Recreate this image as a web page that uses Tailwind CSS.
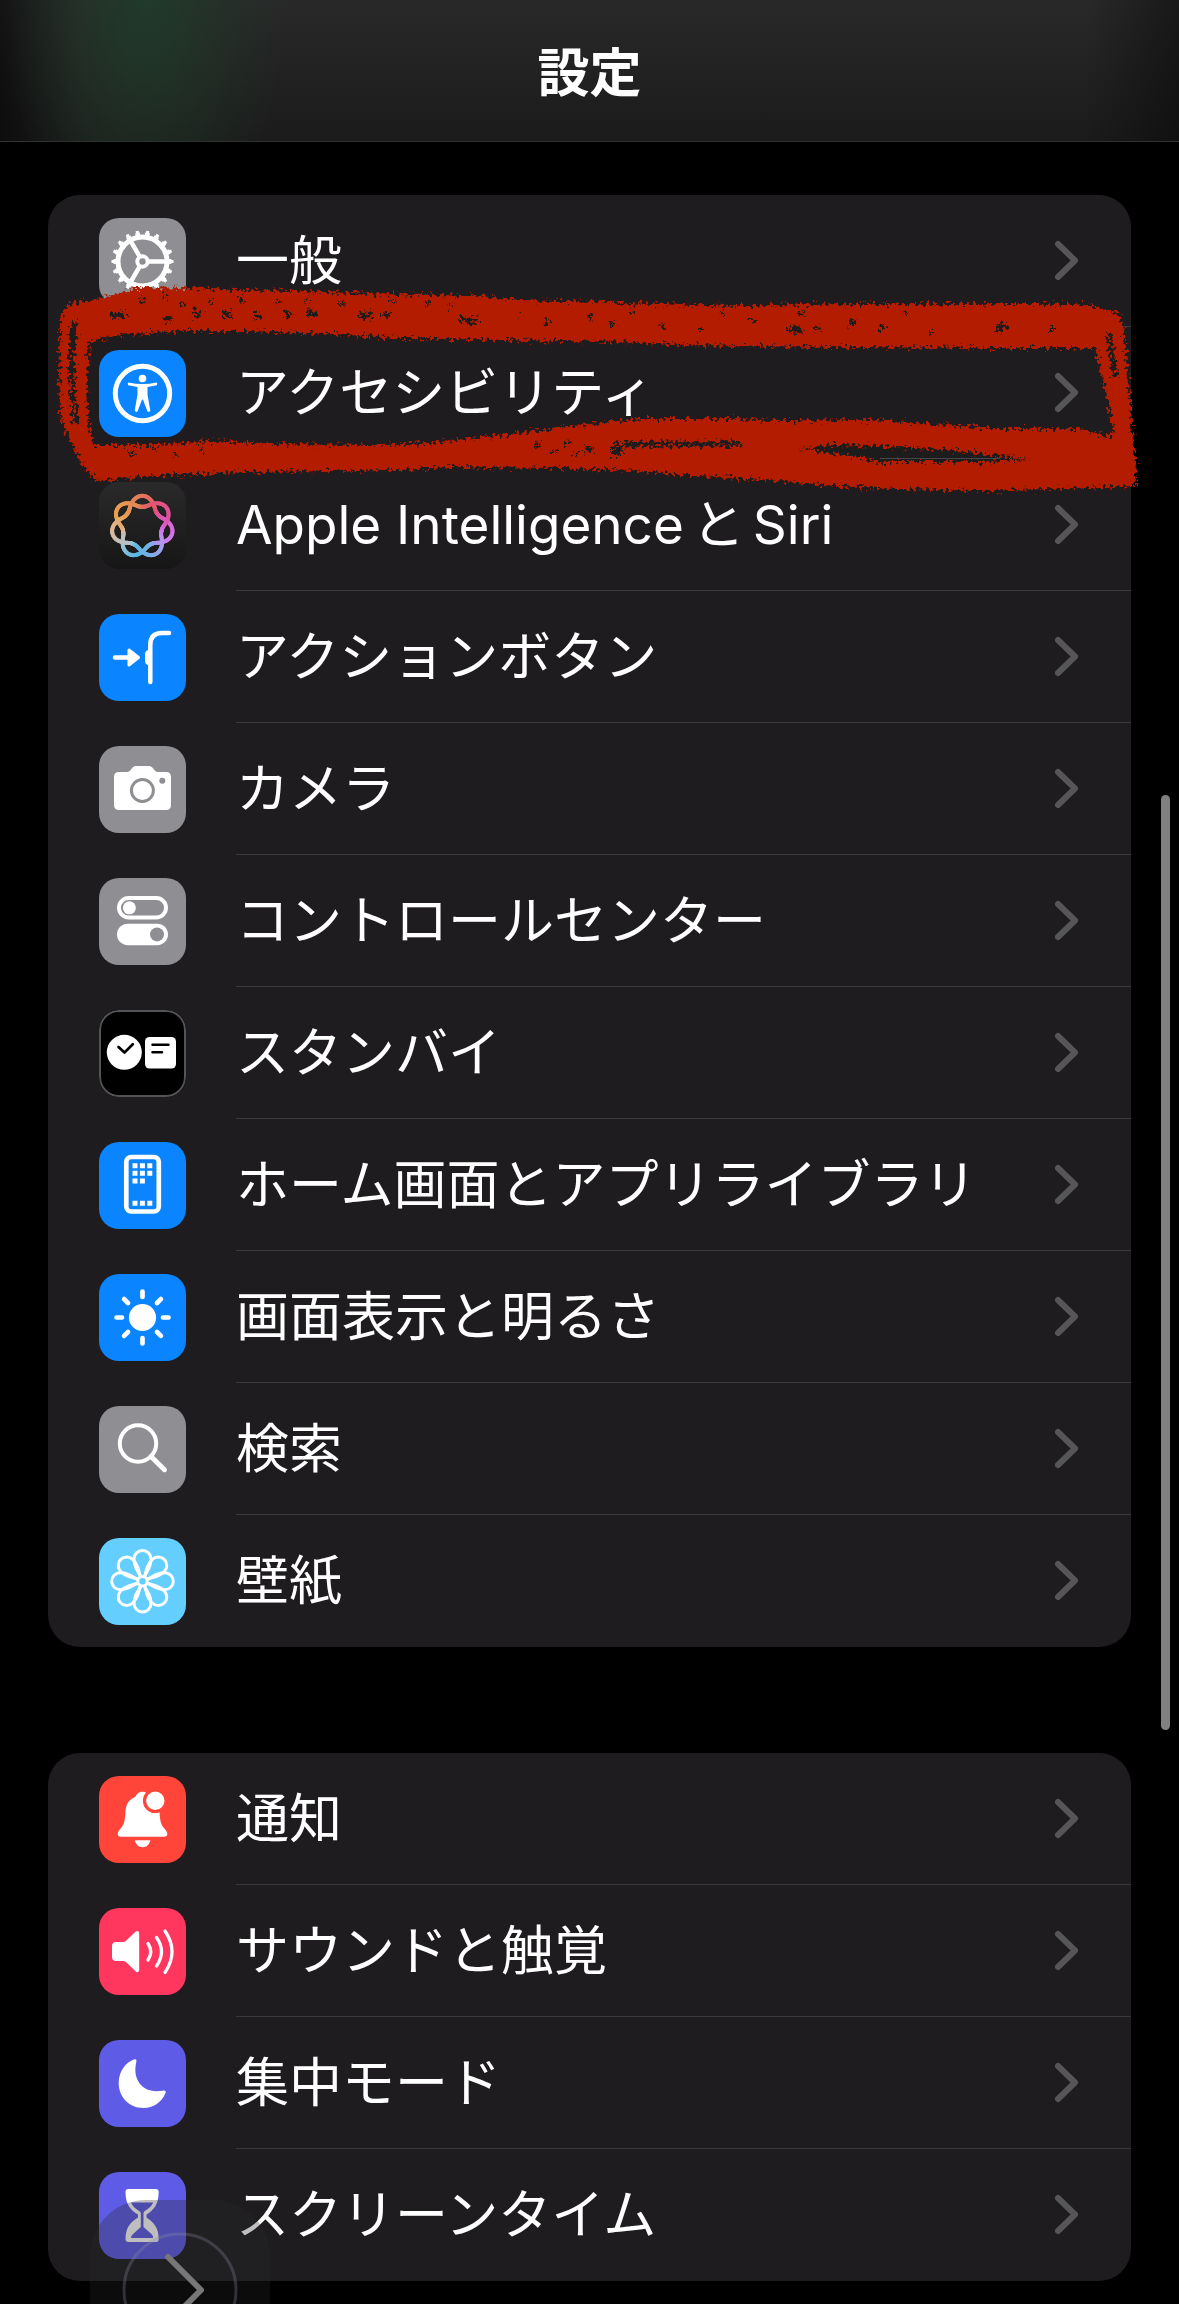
<!DOCTYPE html>
<html lang="ja">
<head>
    <meta charset="UTF-8">
    <meta name="viewport" content="width=device-width, initial-scale=1.0">
    <title>設定</title>
    <script src="https://cdn.jsdelivr.net/npm/@tailwindcss/browser@4"></script>
</head>
<body class="relative bg-black text-white overflow-x-hidden font-[Inter,'Noto_Sans_CJK_JP',sans-serif]">
    <!-- Header -->
    <header class="relative h-[142px] pt-[6px] flex items-center justify-center overflow-hidden border-b border-[#303030] bg-linear-to-b from-[#292929] to-[#1b1b1b]">
        <div class="absolute inset-0 bg-[linear-gradient(90deg,#0008_0%,#0000_7%,#0000_92%,#0006_100%)]"></div>
        <div class="absolute inset-0 bg-[radial-gradient(140px_260px_at_145px_0px,#203a29_0%,#203a2980_45%,#203a2900_100%)]"></div>
        <h1 class="relative text-[52px] leading-[60px] font-bold">設定</h1>
    </header>

    <main class="px-12 pt-[53px] pb-[23px] flex flex-col gap-[106px]">
        <!-- Device settings -->
        <ul class="bg-[#1e1c1f] rounded-[32px]">
            <li>
                <a href="#general" class="flex items-center h-[132px] pl-[51px]">
                    <svg class="size-[87px] shrink-0 rounded-[20px] bg-[#8e8e93]" viewBox="0 0 87 87" fill="none" stroke="#fff">
                        <circle cx="43.5" cy="43.5" r="24.5" stroke-width="5"/>
                        <circle cx="43.5" cy="43.5" r="27.5" stroke-width="3" pathLength="180" stroke-dasharray="5 5" stroke-dashoffset="2.5"/>
                        <circle cx="43.5" cy="43.5" r="29.5" stroke-width="3" pathLength="180" stroke-dasharray="3 7" stroke-dashoffset="1.5"/>
                        <circle cx="43.5" cy="43.5" r="5.2" stroke-width="4"/>
                        <path d="M49 43.500H67M40.700 38.700L31.700 23.100M40.700 48.300L31.700 63.900" stroke-width="4.500"/>
                    </svg>
                    <span class="flex-1 flex items-center justify-between h-full ml-[50px] pr-[51px] border-b border-[#3a3a3d]">
                        <span class="relative z-10 text-[53px] leading-[64px]">一般</span>
                        <svg class="w-[27px] h-[43px]" viewBox="0 0 27 43" fill="none" stroke="#565659" stroke-width="6" stroke-linecap="round" stroke-linejoin="round"><path d="M5 5L22 21.500L5 38"/></svg>
                    </span>
                </a>
            </li>
            <li class="relative">
                <a href="#accessibility" class="flex items-center h-[132px] pl-[51px]">
                    <svg class="size-[87px] shrink-0 rounded-[20px] bg-[#0a84ff]" viewBox="0 0 87 87" fill="#fff">
                        <circle cx="43.5" cy="43.500" r="27.200" fill="none" stroke="#fff" stroke-width="5"/>
                        <circle cx="43.5" cy="28.500" r="3.800"/>
                        <path d="M29.500 32.600Q43.500 35.600 57.500 32.600Q59 33.500 57.800 35.200L48.500 37V44.500L51.300 60.500Q50.500 62.800 48.500 61.500L43.900 49.500H43.100L38.500 61.500Q36.500 62.800 35.700 60.500L38.500 44.500V37L29.200 35.200Q28 33.500 29.500 32.600Z"/>
                    </svg>
                    <span class="flex-1 flex items-center justify-between h-full ml-[50px] pr-[51px] border-b border-[#3a3a3d]">
                        <span class="relative z-10 text-[53px] leading-[64px]">アクセシビリティ</span>
                        <svg class="w-[27px] h-[43px]" viewBox="0 0 27 43" fill="none" stroke="#565659" stroke-width="6" stroke-linecap="round" stroke-linejoin="round"><path d="M5 5L22 21.500L5 38"/></svg>
                    </span>
                </a>
                <!-- Hand-drawn marker around the row -->
                <svg class="absolute left-0 -right-4 -top-12 w-[calc(100%+16px)] h-[224px] pointer-events-none overflow-visible" viewBox="48 279 1099 224" preserveAspectRatio="none">
                    <defs>
                        <filter id="crayon" filterUnits="userSpaceOnUse" x="40" y="270" width="1120" height="240">
                            <feTurbulence type="fractalNoise" baseFrequency="0.3" numOctaves="2" seed="4" result="n"/>
                            <feDisplacementMap in="SourceGraphic" in2="n" scale="14" xChannelSelector="R" yChannelSelector="G"/>
                            <feGaussianBlur stdDeviation="0.5"/>
                        </filter>
                    </defs>
                    <g filter="url(#crayon)">
                        <path fill="#b41a00" fill-rule="evenodd" d="M60 320L67 304L98 299L140 287L185 288L240 290L300 291L380 294L480 296L520 300L570 301L650 304L740 306L855 304L1000 304L1085 304L1118 313L1123 325L1126 350L1130 400L1134 450L1137 470L1135 486L1080 488L980 491L900 489L820 485L780 481L700 476L640 471L560 468L450 467L400 470L330 471L250 472L170 475L130 478L98 481L85 470L75 450L65 430L60 410L59 370ZM89 341L120 335L180 331L250 331L330 334L400 338L500 340L620 342L680 345L740 346L830 347L1000 348L1096 348L1100 370L1108 400L1114 434L1105 436L1080 429L1003 429L947 425L870 420L770 421L737 419L640 419L580 425L513 434L430 443L380 445L273 444L207 441L157 445L93 445L88 420L87 380Z"/>
                        <g fill="none" stroke="#1e1c1f">
                            <path d="M74 321Q71 350 72 375" stroke-width="6"/>
                            <path d="M72 375Q72 400 76 424" stroke-width="5"/>
                            <path d="M1109 334Q1111 350 1115 378" stroke-width="5"/>
                            <path d="M615 446L640 444L742 444" stroke-width="5"/>
                            <path d="M585 448L592 451M612 452L622 452" stroke-width="6"/>
                            <path d="M110 316L125 315M165 322L170 316M192 311L200 316M222 314L232 313M255 317L260 315M285 315L290 314M308 313L318 315M360 316L372 315M383 315L390 314M460 319L478 321M545 322L549 323M610 324L614 323M660 327L664 326M788 330L802 329M815 328L819 327M850 321L856 322M880 328L884 328M996 328L1008 326M1050 329L1054 329" stroke-width="6"/>
                            <path d="M140 300L144 303M162 294L165 297M180 303L183 305M210 302L213 301M240 298L243 300M275 300L279 303M306 298L309 299M340 304L344 303M392 300L395 303M425 302L429 303M450 305L453 306M520 311L522 313M590 318L592 316M630 312L633 313M700 330L704 330M720 313L722 314M750 320L754 321M800 313L803 315M905 312L907 314M930 330L933 333M130 452L134 456M152 448L155 450M176 454L178 455M200 450L204 449M535 444L540 446M550 451L556 452M566 443L570 445M574 455L578 456" stroke-width="4"/>
                        </g>
                        <path fill="#1e1c1f" d="M800 449L830 445L880 446L947 450L1030 459L980 462L880 462L845 455Z"/>
                    </g>
                    <path d="M880 458.500H1000" stroke="#45454a" stroke-width="1"/>
                </svg>
            </li>
            <li>
                <a href="#siri" class="flex items-center h-[132px] pl-[51px]">
                    <svg id="siriIcon" class="size-[87px] shrink-0 rounded-[20px] bg-linear-to-b from-[#2a2a2a] to-[#161616]" viewBox="0 0 87 87" fill="none" stroke-width="4" stroke-linecap="round"></svg>
                    <span class="flex-1 flex items-center justify-between h-full ml-[50px] pr-[51px] border-b border-[#3a3a3d]">
                        <span class="text-[53px] leading-[64px]">Apple Intelligence<span class="mx-2">と</span>Siri</span>
                        <svg class="w-[27px] h-[43px]" viewBox="0 0 27 43" fill="none" stroke="#565659" stroke-width="6" stroke-linecap="round" stroke-linejoin="round"><path d="M5 5L22 21.500L5 38"/></svg>
                    </span>
                </a>
            </li>
            <li>
                <a href="#action-button" class="flex items-center h-[132px] pl-[51px]">
                    <svg class="size-[87px] shrink-0 rounded-[20px] bg-[#0a84ff]" viewBox="0 0 87 87" fill="none" stroke="#fff" stroke-width="4.500" stroke-linecap="round" stroke-linejoin="round">
                        <path d="M16 43.500H31M51.300 68V31Q51.300 19 63 19H70"/>
                        <path d="M30 36L39.500 43.500L30 51Z" fill="#fff" stroke-width="3"/>
                        <path d="M51 36H49Q46 37 46 40V47Q46 50 49 51H51Z" fill="#fff" stroke="none"/>
                    </svg>
                    <span class="flex-1 flex items-center justify-between h-full ml-[50px] pr-[51px] border-b border-[#3a3a3d]">
                        <span class="text-[53px] leading-[64px]">アクションボタン</span>
                        <svg class="w-[27px] h-[43px]" viewBox="0 0 27 43" fill="none" stroke="#565659" stroke-width="6" stroke-linecap="round" stroke-linejoin="round"><path d="M5 5L22 21.500L5 38"/></svg>
                    </span>
                </a>
            </li>
            <li>
                <a href="#camera" class="flex items-center h-[132px] pl-[51px]">
                    <svg class="size-[87px] shrink-0 rounded-[20px] bg-[#8e8e93]" viewBox="0 0 87 87" fill="#fff">
                        <path d="M20 26H28Q30.500 26 32 23.500Q34 20 37 20H50Q53 20 55 23.500Q56.500 26 59 26H67Q72 26 72 31V59Q72 64 67 64H20Q15 64 15 59V31Q15 26 20 26Z"/>
                        <circle cx="43.400" cy="44.500" r="11" fill="none" stroke="#8e8e93" stroke-width="3"/>
                        <circle cx="63.300" cy="34.700" r="3" fill="#8e8e93"/>
                    </svg>
                    <span class="flex-1 flex items-center justify-between h-full ml-[50px] pr-[51px] border-b border-[#3a3a3d]">
                        <span class="text-[53px] leading-[64px]">カメラ</span>
                        <svg class="w-[27px] h-[43px]" viewBox="0 0 27 43" fill="none" stroke="#565659" stroke-width="6" stroke-linecap="round" stroke-linejoin="round"><path d="M5 5L22 21.500L5 38"/></svg>
                    </span>
                </a>
            </li>
            <li>
                <a href="#control-center" class="flex items-center h-[132px] pl-[51px]">
                    <svg class="size-[87px] shrink-0 rounded-[20px] bg-[#8e8e93]" viewBox="0 0 87 87" fill="#fff">
                        <rect x="20" y="20" width="47" height="19.500" rx="9.700" fill="none" stroke="#fff" stroke-width="4"/>
                        <circle cx="30.400" cy="29.800" r="6.500"/>
                        <rect x="18" y="45.700" width="51" height="21.500" rx="10.700"/>
                        <circle cx="58" cy="56.400" r="7" fill="#8e8e93"/>
                    </svg>
                    <span class="flex-1 flex items-center justify-between h-full ml-[50px] pr-[51px] border-b border-[#3a3a3d]">
                        <span class="text-[53px] leading-[64px]">コントロールセンター</span>
                        <svg class="w-[27px] h-[43px]" viewBox="0 0 27 43" fill="none" stroke="#565659" stroke-width="6" stroke-linecap="round" stroke-linejoin="round"><path d="M5 5L22 21.500L5 38"/></svg>
                    </span>
                </a>
            </li>
            <li>
                <a href="#standby" class="flex items-center h-[132px] pl-[51px]">
                    <svg class="size-[87px] shrink-0 rounded-[20px] bg-black" viewBox="0 0 87 87" fill="#fff">
                        <rect x="1" y="1" width="85" height="85" rx="19" fill="none" stroke="#545456" stroke-width="2"/>
                        <circle cx="25.300" cy="42.300" r="17.500"/>
                        <path d="M19.500 37L25.500 42.500L33.800 34.300" fill="none" stroke="#000" stroke-width="2.700" stroke-linecap="round" stroke-linejoin="round"/>
                        <rect x="46" y="27" width="31" height="31.500" rx="4.500"/>
                        <path d="M53.500 34.700H69.500M53.500 42.300H63" stroke="#000" stroke-width="2.500" stroke-linecap="round"/>
                    </svg>
                    <span class="flex-1 flex items-center justify-between h-full ml-[50px] pr-[51px] border-b border-[#3a3a3d]">
                        <span class="text-[53px] leading-[64px]">スタンバイ</span>
                        <svg class="w-[27px] h-[43px]" viewBox="0 0 27 43" fill="none" stroke="#565659" stroke-width="6" stroke-linecap="round" stroke-linejoin="round"><path d="M5 5L22 21.500L5 38"/></svg>
                    </span>
                </a>
            </li>
            <li>
                <a href="#home-screen" class="flex items-center h-[132px] pl-[51px]">
                    <svg class="size-[87px] shrink-0 rounded-[20px] bg-[#0a84ff]" viewBox="0 0 87 87" fill="none" stroke="#fff">
                        <rect x="27.300" y="15" width="32.500" height="54.500" rx="5" stroke-width="4.700"/>
                        <path d="M33.500 23.700H54M33.500 31.300H54M33.500 39H46M33.500 61.300H54" stroke-width="5" stroke-dasharray="5 2.400"/>
                    </svg>
                    <span class="flex-1 flex items-center justify-between h-full ml-[50px] pr-[51px] border-b border-[#3a3a3d]">
                        <span class="text-[53px] leading-[64px]">ホーム画面とアプリライブラリ</span>
                        <svg class="w-[27px] h-[43px]" viewBox="0 0 27 43" fill="none" stroke="#565659" stroke-width="6" stroke-linecap="round" stroke-linejoin="round"><path d="M5 5L22 21.500L5 38"/></svg>
                    </span>
                </a>
            </li>
            <li>
                <a href="#display" class="flex items-center h-[132px] pl-[51px]">
                    <svg class="size-[87px] shrink-0 rounded-[20px] bg-[#0a84ff]" viewBox="0 0 87 87" fill="#fff" stroke="#fff">
                        <circle cx="43.500" cy="43.500" r="13.600" stroke="none"/>
                        <path d="M43.500 17.500V23M43.500 64V69.500M17.500 43.500H23M64 43.500H69.500M25.100 25.100L29 29M58 58L61.900 61.900M25.100 61.900L29 58M58 29L61.900 25.100" stroke-width="4.700" stroke-linecap="round"/>
                    </svg>
                    <span class="flex-1 flex items-center justify-between h-full ml-[50px] pr-[51px] border-b border-[#3a3a3d]">
                        <span class="text-[53px] leading-[64px]">画面表示と明るさ</span>
                        <svg class="w-[27px] h-[43px]" viewBox="0 0 27 43" fill="none" stroke="#565659" stroke-width="6" stroke-linecap="round" stroke-linejoin="round"><path d="M5 5L22 21.500L5 38"/></svg>
                    </span>
                </a>
            </li>
            <li>
                <a href="#search" class="flex items-center h-[132px] pl-[51px]">
                    <svg class="size-[87px] shrink-0 rounded-[20px] bg-[#8e8e93]" viewBox="0 0 87 87" fill="none" stroke="#fff" stroke-linecap="round">
                        <circle cx="39" cy="37.500" r="18.200" stroke-width="4"/>
                        <path d="M52 50.500L65.500 63.700" stroke-width="5"/>
                    </svg>
                    <span class="flex-1 flex items-center justify-between h-full ml-[50px] pr-[51px] border-b border-[#3a3a3d]">
                        <span class="text-[53px] leading-[64px]">検索</span>
                        <svg class="w-[27px] h-[43px]" viewBox="0 0 27 43" fill="none" stroke="#565659" stroke-width="6" stroke-linecap="round" stroke-linejoin="round"><path d="M5 5L22 21.500L5 38"/></svg>
                    </span>
                </a>
            </li>
            <li>
                <a href="#wallpaper" class="flex items-center h-[132px] pl-[51px]">
                    <svg class="size-[87px] shrink-0 rounded-[20px] bg-[#64cfff]" viewBox="-43.500 -43.200 87 87" fill="none" stroke="#fff" stroke-width="3">
                        <path id="petal" d="M0 -3C-5 -9 -8.500 -16 -8.500 -22.300A8.500 8.500 0 0 1 8.500 -22.300C8.500 -16 5 -9 0 -3Z"/>
                        <use href="#petal" transform="rotate(45)"/>
                        <use href="#petal" transform="rotate(90)"/>
                        <use href="#petal" transform="rotate(135)"/>
                        <use href="#petal" transform="rotate(180)"/>
                        <use href="#petal" transform="rotate(225)"/>
                        <use href="#petal" transform="rotate(270)"/>
                        <use href="#petal" transform="rotate(315)"/>
                        <circle r="4.500" fill="#64cfff" stroke-width="2.500"/>
                    </svg>
                    <span class="flex-1 flex items-center justify-between h-full ml-[50px] pr-[51px] border-b border-transparent">
                        <span class="text-[53px] leading-[64px]">壁紙</span>
                        <svg class="w-[27px] h-[43px]" viewBox="0 0 27 43" fill="none" stroke="#565659" stroke-width="6" stroke-linecap="round" stroke-linejoin="round"><path d="M5 5L22 21.500L5 38"/></svg>
                    </span>
                </a>
            </li>
        </ul>

        <!-- Notifications and focus -->
        <ul class="bg-[#1e1c1f] rounded-[32px]">
            <li>
                <a href="#notifications" class="flex items-center h-[132px] pl-[51px]">
                    <svg class="size-[87px] shrink-0 rounded-[20px] bg-[#ff453a]" viewBox="0 0 87 87" fill="#fff">
                        <path d="M43.500 15.700C39 15.700 37.500 18.500 36.500 20.800C29 24 27 29 26.500 35C26 44 25.500 48 22 52C19.500 55 18.700 56.500 18.700 58Q18.700 60.700 22 60.700H65Q68.300 60.700 68.300 58C68.300 56.500 67.500 55 65 52C61.500 48 61 44 60.500 35C60 29 58 24 50.500 20.800C49.500 18.500 48 15.700 43.500 15.700Z"/>
                        <path d="M35.800 64.300H51.400C50.500 68.500 47.500 71.300 43.600 71.300S36.700 68.500 35.800 64.300Z"/>
                        <circle cx="56.300" cy="24.700" r="10.800" stroke="#ff453a" stroke-width="3.200"/>
                    </svg>
                    <span class="flex-1 flex items-center justify-between h-full ml-[50px] pr-[51px] border-b border-[#3a3a3d]">
                        <span class="text-[53px] leading-[64px]">通知</span>
                        <svg class="w-[27px] h-[43px]" viewBox="0 0 27 43" fill="none" stroke="#565659" stroke-width="6" stroke-linecap="round" stroke-linejoin="round"><path d="M5 5L22 21.500L5 38"/></svg>
                    </span>
                </a>
            </li>
            <li>
                <a href="#sound" class="flex items-center h-[132px] pl-[51px]">
                    <svg class="size-[87px] shrink-0 rounded-[20px] bg-[#ff375f]" viewBox="0 0 87 87" fill="none" stroke="#fff" stroke-width="3.300" stroke-linecap="round">
                        <path d="M17 34H24Q25.500 34 27 32.700L36.500 23.700Q38 22.500 39.200 23.200Q40.200 23.800 40.200 25V62Q40.200 63.500 39 64Q37.800 64.500 36.500 63.300L27 54Q25.500 53 24 53H17Q13 53 13 49V38Q13 34 17 34Z" fill="#fff" stroke="none"/>
                        <path d="M49 35.500Q54.500 43.500 49 52M57.500 29.500Q67.500 43.500 57.500 58M66 23Q80 43.500 66 64.500"/>
                    </svg>
                    <span class="flex-1 flex items-center justify-between h-full ml-[50px] pr-[51px] border-b border-[#3a3a3d]">
                        <span class="text-[53px] leading-[64px]">サウンドと触覚</span>
                        <svg class="w-[27px] h-[43px]" viewBox="0 0 27 43" fill="none" stroke="#565659" stroke-width="6" stroke-linecap="round" stroke-linejoin="round"><path d="M5 5L22 21.500L5 38"/></svg>
                    </span>
                </a>
            </li>
            <li>
                <a href="#focus" class="flex items-center h-[132px] pl-[51px]">
                    <svg class="size-[87px] shrink-0 rounded-[20px] bg-[#5e5ce6]" viewBox="0 0 87 87" fill="#fff">
                        <path d="M35.500 19.200Q38 18.800 37.300 22C33 40 44 54 63.500 50.700Q67.500 50 66.500 53C63 62 54 68 44.500 68C30 68 19.700 57 19.700 43C19.700 32 26 22.500 35.500 19.200Z"/>
                    </svg>
                    <span class="flex-1 flex items-center justify-between h-full ml-[50px] pr-[51px] border-b border-[#3a3a3d]">
                        <span class="text-[53px] leading-[64px]">集中モード</span>
                        <svg class="w-[27px] h-[43px]" viewBox="0 0 27 43" fill="none" stroke="#565659" stroke-width="6" stroke-linecap="round" stroke-linejoin="round"><path d="M5 5L22 21.500L5 38"/></svg>
                    </span>
                </a>
            </li>
            <li>
                <a href="#screen-time" class="flex items-center h-[132px] pl-[51px]">
                    <svg class="size-[87px] shrink-0 rounded-[20px] bg-[#5e5ce6]" viewBox="0 0 87 87" fill="#fff">
                        <path d="M29.500 17H56.700Q59.700 17 59.700 20C59.700 33 54 38.500 47.500 42.500V45.500C54 50 59.700 55 59.700 67Q59.700 70 56.700 70H29.500Q26.500 70 26.500 67C26.500 55 32 50 39 45.500V42.500C32 38.500 26.500 33 26.500 20Q26.500 17 29.500 17Z"/>
                        <path d="M32 30.500H54.300C52 35 49 37 45.500 39.300Q44.500 40 44.500 41.500V55L53 62.500Q55 66 53.500 66H32.500Q31 66 33.500 62.500L41.800 55V41.500Q41.800 40 40.500 39.300C37 37 34 35 32 30.500Z" fill="#5e5ce6"/>
                    </svg>
                    <span class="flex-1 flex items-center justify-between h-full ml-[50px] pr-[51px] border-b border-transparent">
                        <span class="text-[53px] leading-[64px]">スクリーンタイム</span>
                        <svg class="w-[27px] h-[43px]" viewBox="0 0 27 43" fill="none" stroke="#565659" stroke-width="6" stroke-linecap="round" stroke-linejoin="round"><path d="M5 5L22 21.500L5 38"/></svg>
                    </span>
                </a>
            </li>
        </ul>
    </main>

    <!-- Scroll indicator -->
    <div class="fixed right-[9px] top-[795px] w-[9px] h-[935px] rounded-full bg-[#808080]"></div>

    <!-- Floating button -->
    <button type="button" aria-label="次へ" class="fixed left-[90px] -bottom-[76px] z-20 size-[180px] rounded-[56px] bg-[#282828]/30 flex items-center justify-center">
        <svg class="size-[120px]" viewBox="0 0 120 120" fill="none">
            <circle cx="60" cy="60" r="56" stroke="#8a8aa0" stroke-opacity=".3" stroke-width="3"/>
            <path d="M48 27L81 60L48 93" stroke="#777" stroke-width="6" stroke-linecap="round" stroke-linejoin="round"/>
        </svg>
    </button>

    <script>
        // Seven-lobed loop, coloured by angle clockwise from the top
        const siriIcon = document.getElementById('siriIcon');
        const colors = [[226,118,92], [228,84,112], [222,80,160], [216,108, 226], [184,146,240], [120,176,232], [86,184,226], [176,196,206], [222,184,156], [232,164,76], [232,148,84]];
        const steps = 280;

        function point(i) {
            const t = i / steps * Math.PI * 4;
            const r = 24 + 5.5 * Math.cos(3.5 * t) + 1.2 * Math.cos(7 * t);
            const angle = t + 0.12 * Math.sin(3.5 * t);
            return (43.3 + r * Math.sin(angle)).toFixed(2) + ' ' + (44.5 - r * Math.cos(angle)).toFixed(2);
        }

        for (let i = 0; i < steps; i++) {
            const pos = (i / steps * 2 % 1) * colors.length;
            const a = colors[Math.floor(pos)];
            const b = colors[(Math.floor(pos) + 1) % colors.length];
            const mix = a.map((c, k) => Math.round(c + (b[k] - c) * (pos % 1)));
            const path = document.createElementNS('http://www.w3.org/2000/svg', 'path');
            path.setAttribute('d', `M${point(i)}L${point(i + 1)}`);
            path.setAttribute('stroke', `rgb(${mix.join(',')})`);
            siriIcon.appendChild(path);
        }
    </script>
</body>
</html>
